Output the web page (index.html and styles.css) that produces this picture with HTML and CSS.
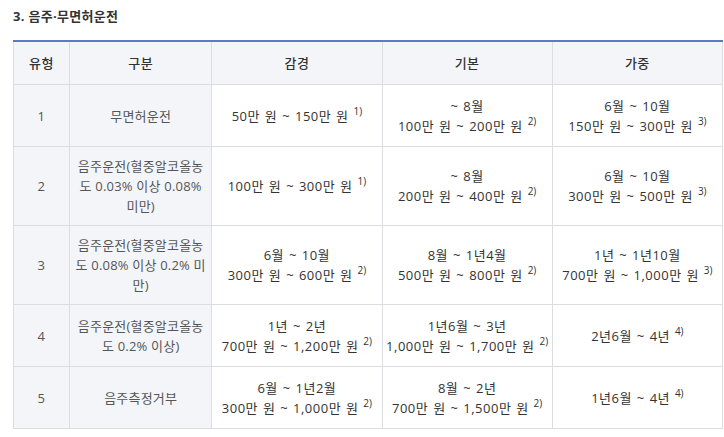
FILE: index.html
```html
<!DOCTYPE html>
<html lang="ko">
<head>
<meta charset="utf-8">
<link rel="stylesheet" href="styles.css">
</head>
<body>
<div class="page">
  <h3 class="title">3. 음주·무면허운전</h3>
  <table class="penalty">
    <colgroup>
      <col class="c-type"><col class="c-kind"><col class="c-val"><col class="c-val"><col class="c-val">
    </colgroup>
    <thead>
      <tr><th>유형</th><th>구분</th><th>감경</th><th>기본</th><th>가중</th></tr>
    </thead>
    <tbody>
      <tr class="r2">
        <td class="num">1</td>
        <td class="kind">무면허운전</td>
        <td>50만 원 ~ 150만 원 <sup>1)</sup></td>
        <td>~ 8월<br>100만 원 ~ 200만 원 <sup>2)</sup></td>
        <td>6월 ~ 10월<br>150만 원 ~ 300만 원 <sup>3)</sup></td>
      </tr>
      <tr class="r3">
        <td class="num">2</td>
        <td class="kind">음주운전(혈중알코올농<br>도 0.03% 이상 0.08%<br>미만)</td>
        <td>100만 원 ~ 300만 원 <sup>1)</sup></td>
        <td>~ 8월<br>200만 원 ~ 400만 원 <sup>2)</sup></td>
        <td>6월 ~ 10월<br>300만 원 ~ 500만 원 <sup>3)</sup></td>
      </tr>
      <tr class="r3">
        <td class="num">3</td>
        <td class="kind">음주운전(혈중알코올농<br>도 0.08% 이상 0.2% 미<br>만)</td>
        <td>6월 ~ 10월<br>300만 원 ~ 600만 원 <sup>2)</sup></td>
        <td>8월 ~ 1년4월<br>500만 원 ~ 800만 원 <sup>2)</sup></td>
        <td>1년 ~ 1년10월<br>700만 원 ~ 1,000만 원 <sup>3)</sup></td>
      </tr>
      <tr class="r2">
        <td class="num">4</td>
        <td class="kind">음주운전(혈중알코올농<br>도 0.2% 이상)</td>
        <td>1년 ~ 2년<br>700만 원 ~ 1,200만 원 <sup>2)</sup></td>
        <td>1년6월 ~ 3년<br>1,000만 원 ~ 1,700만 원 <sup>2)</sup></td>
        <td>2년6월 ~ 4년 <sup>4)</sup></td>
      </tr>
      <tr class="r2">
        <td class="num">5</td>
        <td class="kind">음주측정거부</td>
        <td>6월 ~ 1년2월<br>300만 원 ~ 1,000만 원 <sup>2)</sup></td>
        <td>8월 ~ 2년<br>700만 원 ~ 1,500만 원 <sup>2)</sup></td>
        <td>1년6월 ~ 4년 <sup>4)</sup></td>
      </tr>
    </tbody>
  </table>
</div>
</body>
</html>
```

FILE: styles.css
```css
html, body {
  margin: 0;
  padding: 0;
  background: #ffffff;
}
body {
  font-family: "Open Sans", "Noto Sans CJK KR", sans-serif;
  font-size: 13px;
  color: #333333;
}
.page {
  padding: 7px 0 0 13px;
}
.title {
  margin: 0 0 14px 0;
  font-size: 13px;
  line-height: 19px;
  font-weight: bold;
  color: #333333;
  letter-spacing: 0.3px;
}
.penalty {
  width: 710px;
  border-collapse: collapse;
  table-layout: fixed;
  border-top: 2px solid #5b7cc3;
}
.c-type { width: 56px; }
.c-kind { width: 142px; }
.c-val { width: 170px; }
.penalty th,
.penalty td {
  border: 1px solid #dcdde1;
  text-align: center;
  vertical-align: middle;
  line-height: 20px;
  padding: 0 3px;
  letter-spacing: 0.5px;
  word-spacing: 1px;
}
.penalty th {
  height: 42px;
  background: #f4f5f9;
  font-weight: 500;
  color: #333333;
}
.penalty td.num,
.penalty td.kind {
  background: #f4f5f9;
  color: #555555;
}
.penalty td.kind {
  white-space: nowrap;
  letter-spacing: 0.2px;
  word-spacing: 0;
}
.r2 td { height: 61px; }
.r3 td { height: 78px; }
.penalty sup {
  font-size: 10px;
  line-height: 0;
  vertical-align: 6px;
  letter-spacing: 0;
}
```
